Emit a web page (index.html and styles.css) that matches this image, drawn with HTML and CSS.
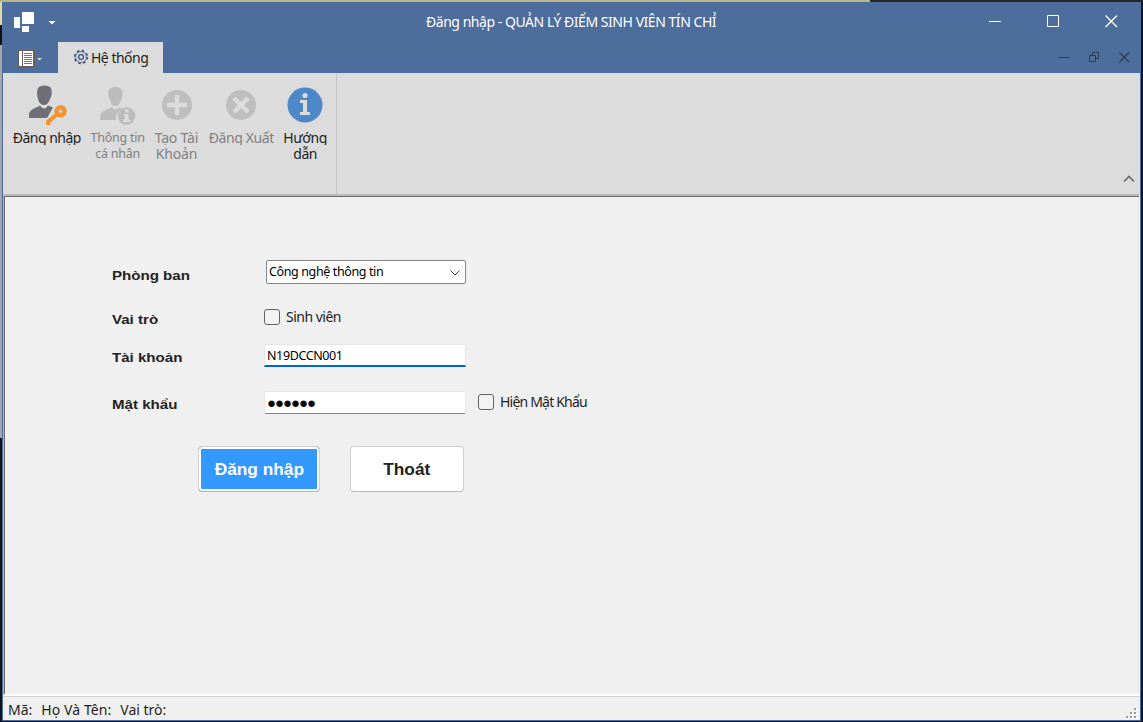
FILE: index.html
```html
<!DOCTYPE html>
<html lang="vi">
<head>
<meta charset="utf-8">
<title>Đăng nhập - QUẢN LÝ ĐIỂM SINH VIÊN TÍN CHỈ</title>
<link rel="stylesheet" href="styles.css">
</head>
<body>
<div class="desktop">
<div class="window">
  <header class="titlebar">
    <svg class="applogo" width="46" height="24" viewBox="0 0 46 24"><path fill="#fff" d="M8 1h12v12H8zM0 6h6v11H0zM8 15h7v6H8zM34.500 10h7l-3.500 3.500z"/></svg>
    <h1 class="title"><span class="t-title">Đăng nhập - QUẢN LÝ ĐIỂM SINH VIÊN TÍN CHỈ</span></h1>
    <svg class="controls" width="132" height="14" viewBox="0 0 132 14" fill="none" stroke="#fff"><path d="M0 7.500h12" /><path d="M58.500 1.500h11v11h-11z"/><path stroke-width="1.400" d="M116.500 1.500l11.500 11.500M128 1.500L116.500 13"/></svg>
  </header>
  <nav class="tabs">
    <svg class="filemenu" width="26" height="18" viewBox="0 0 26 18"><path fill="#65625d" d="M0 0h17v18H0z"/><path fill="#fff" d="M1 1h3v15H1zM5 1h10v15H5z"/><path stroke="#77746f" d="M6 3.500h8M6 5.500h8M6 7.500h8M6 9.500h8M6 11.500h8M6 13.500h8"/><path fill="#ddd" d="M19 8h5l-2.500 2.500z"/></svg>
    <div class="tab">
      <svg width="16" height="16" viewBox="0 0 16 16"><circle cx="8" cy="8" r="6" fill="none" stroke="#465270" stroke-width="2.400" stroke-dasharray="2.400 2.312"/><circle cx="8" cy="8" r="4.300" fill="none" stroke="#c9d6ec" stroke-width="2.600"/><circle cx="8" cy="8" r="5.500" fill="none" stroke="#55617e" stroke-width=".8"/><circle cx="8" cy="8" r="2.400" fill="#dcdcdc" stroke="#465270" stroke-width="1.300"/></svg>
      <span class="t-tab">Hệ thống</span>
    </div>
    <svg class="mdi" width="74" height="12" viewBox="0 0 74 12" fill="none" stroke="#2f3b52"><path d="M0 6.500h10M30.500 4.500h6v6h-6zM33.500 4v-2.500h6v6H37"/><path stroke-width="1.300" d="M60.500 1.500l9.500 9.500M70 1.500L60.500 11"/></svg>
  </nav>
  <section class="ribbon">
    <div class="group">
      <div class="item login">
        <svg width="40" height="42" viewBox="0 0 40 42"><path fill="#6d6e77" d="M9 3C11-.5 20-.5 22 3c1.500 4 .5 8-1 11-1.500 4-3 6-6 6s-5-2-6-6C8 11 7.500 7 9 3zM11 20.500q4.500 6 8 0l5 2-6 10.500H0v-4c1-5 7-6 11-8.500z"/><path fill="#f29434" fill-rule="evenodd" d="M31.500 20a6.300 6.300 0 1 1 0 12.600q-2 0-3.500-.8l-2.500 2.700h-2v2.500h-2v3H17v-4.300l8.800-7.200A6.300 6.300 0 0 1 31.500 20zM31.500 24.600a1.700 1.700 0 1 0 0 3.400a1.700 1.700 0 0 0 0-3.400z"/></svg>
        <span class="t-login cut">Đăng nhập</span>
      </div>
      <div class="item info off">
        <svg width="36" height="40" viewBox="0 0 36 40"><path fill="#bcbcbc" d="M9 3c2-4 11-4 13 0 1.300 4 .5 7-1 10-1.500 4-2.500 6-5.500 6s-4-2-5.500-6C8.500 10 7.500 7 9 3zM12 20q4 5 7 0l3 1.500c-5 3-7 8-6 11.500H0v-4c1-5 7-6 12-9z"/><circle cx="26.500" cy="29" r="8.700" fill="#bcbcbc"/><path fill="#dcdcdc" d="M25 22.500h3.500v3H25zM24 27h4.500v5.500H30V35h-7v-2.500h2v-3h-1z"/></svg>
        <span class="t-info">Thông tin</span><span class="t-info2">cá nhân</span>
      </div>
      <div class="item create off">
        <svg width="30" height="30" viewBox="0 0 30 30"><circle cx="15" cy="15" r="15" fill="#bebebe"/><path stroke="#dcdcdc" stroke-width="4.500" d="M15 5v20M5 15h20"/></svg>
        <span class="t-create cut">Tạo Tài</span><span class="t-create2">Khoản</span>
      </div>
      <div class="item logout off">
        <svg width="30" height="30" viewBox="0 0 30 30"><circle cx="15" cy="15" r="15" fill="#bebebe"/><path stroke="#dcdcdc" stroke-width="4.500" d="M8 8l14 14M22 8L8 22"/></svg>
        <span class="t-logout cut">Đăng Xuất</span>
      </div>
      <div class="item guide">
        <svg width="36" height="36" viewBox="0 0 36 36"><circle cx="18" cy="18" r="17.500" fill="#4d89c9"/><circle cx="18" cy="8.500" r="2.600" fill="#dcdcdc"/><path fill="#dcdcdc" d="M13 13h7v12h3v3H13v-3h3v-9h-3z"/></svg>
        <span class="t-guide cut">Hướng</span><span class="t-guide2">dẫn</span>
      </div>
    </div>
    <svg class="collapse" width="12" height="8" viewBox="0 0 12 8"><path d="M1 6.500l5-5 5 5" fill="none" stroke="#666" stroke-width="1.600"/></svg>
  </section>
  <main class="client">
    <div class="row dept"><div class="label"><span class="t-dept">Phòng ban</span></div>
      <div class="combo"><span class="t-combo">Công nghệ thông tin</span><svg width="10" height="6" viewBox="0 0 10 6"><path d="M.5.500L5 5 9.500.500" fill="none" stroke="#444"/></svg></div></div>
    <div class="row role"><div class="label"><span class="t-role">Vai trò</span></div><i class="check"></i><span class="t-student">Sinh viên</span></div>
    <div class="row account"><div class="label"><span class="t-account">Tài khoản</span></div><div class="field active"><span class="t-user">N19DCCN001</span></div></div>
    <div class="row pass"><div class="label"><span class="t-pass">Mật khẩu</span></div><div class="field"><span class="t-dots">●●●●●●</span></div><i class="check"></i><span class="t-show">Hiện Mật Khẩu</span></div>
    <div class="buttons"><div class="btn primary"><span class="t-blogin">Đăng nhập</span></div><div class="btn quit"><span class="t-quit">Thoát</span></div></div>
  </main>
  <footer class="status">
    <span class="t-ma">Mã:</span><span class="t-name">Họ Và Tên:</span><span class="t-vai">Vai trò:</span>
    <svg class="grip" width="12" height="12" viewBox="0 0 12 12"><path fill="#fff" d="M9 1h3v2H9zM5 5h3v2H5zM9 5h3v2H9zM1 9h3v2H1zM5 9h3v2H5zM9 9h3v2H9z"/><path fill="#999" d="M8 0h2v2H8zM4 4h2v2H4zM8 4h2v2H8zM0 8h2v2H0zM4 8h2v2H4zM8 8h2v2H8z"/></svg>
  </footer>
</div>
</div>
</body>
</html>
```
FILE: styles.css
```css
* { box-sizing: border-box; }
body { margin: 0; font: 14px/16px "Noto Sans", "Open Sans", sans-serif; color: #1e1e1e; overflow: hidden; }
span { white-space: nowrap; }
svg { display: block; flex: none; }
.desktop {
  width: 1143px; height: 722px; padding: 2px 2px 1px;
  background:
    linear-gradient(to right, #b9b58b 870px, #242529 870px) 0 0 / 100% 2px no-repeat,
    linear-gradient(#ddd8a4 25px, #111 25px, #111 45px, #a3a6aa 45px, #a3a6aa 438px, #101420 438px) 0 0 / 2px 100% no-repeat,
    #14161d;
}
.window { height: 719px; display: flex; flex-direction: column; border: solid #4d6d9c; border-width: 0 1px 1px; background: #f0f0f0; }
.titlebar { height: 40px; display: flex; background: #4d6d9c; color: #fff; }
.applogo { margin: 9px 0 0 11px; }
.title { margin: 12px 0 0 366px; width: 563px; font: inherit; }
.controls { margin-top: 12px; }
.tabs { height: 31px; display: flex; background: #4d6d9c; }
.filemenu { margin: 8px 0 0 15px; }
.tab { width: 105px; margin-left: 14px; background: #dcdcdc; display: flex; padding: 8px 0 0 15px; gap: 2px; }
.tab svg { margin-top: -1px; }
.mdi { margin: 9px 0 0 896px; }
.ribbon { height: 121px; background: #dcdcdc; display: flex; justify-content: space-between; }
.group { width: 334px; border-right: 1px solid #c4c4c4; display: flex; }
.item { display: flex; flex-direction: column; align-items: center; }
.off { color: #818181; }
.login { width: 88px; padding-top: 12px; }
.login svg { margin: 0 0 3px 4px; }
.info { width: 54px; padding-top: 14px; }
.info svg { margin: 0 0 3px 1px; }
.create { width: 64px; padding-top: 17px; }
.create svg { margin: 0 0 10px 2px; }
.logout { width: 64px; padding-top: 17px; margin-left: 1px; }
.logout svg { margin-bottom: 10px; }
.guide { width: 62px; padding-top: 14px; margin-left: 1px; }
.guide svg { margin-bottom: 7px; }
.cut { clip-path: inset(-2px 0 1px 0); }
.collapse { margin: 102px 5px 0 0; }
.client { height: 502px; border-top: 2px solid #bbb; box-shadow: inset 1px 1px #696969, inset -1px 0 #e3e3e3; border-bottom: 2px solid #fff; padding: 64px 0 0 109px; border-left: 1px solid #b5b5b5; border-right: 1px solid #fff; }
.label { width: 152px; font: 700 13px/16px "Liberation Sans", sans-serif; color: #222; }
.label span { display: inline-block; transform: scaleX(1.16); transform-origin: left; }
.row { display: flex; align-items: flex-start; margin-left: -1px; }
.dept { height: 49px; }
.dept .label { margin-top: 8px; }
.combo { margin-left: 2px; width: 200px; height: 24px; border: 1px solid #858585; border-radius: 2px; background: #fff; padding: 3px 5px 0 2px; display: flex; justify-content: space-between; color: #000; }
.combo svg { margin-top: 6px; }
.check { width: 16px; height: 16px; border: 1px solid #626262; border-radius: 3px; background: #f3f3f3; margin-right: 6px; }
.role { height: 35px; }
.role .label { margin-top: 3px; }
.account { height: 47px; }
.account .label { margin-top: 6px; }
.field { width: 202px; height: 23px; background: #fff; border: 1px solid #e6e6e6; border-bottom: 1px solid #858585; border-radius: 2px; padding: 3px 0 0 2px; color: #000; }
.field span { display: block; }
.active { border-bottom: 2px solid #0067c0; border-radius: 0; }
.pass { height: 55px; }
.pass .label { margin-top: 6px; }
.pass .field { padding-top: 2px; }
.pass .check { margin: 3px 6px 0 12px; }
.t-show { margin-top: 3px; }
.buttons { display: flex; gap: 30px; margin-left: 85px; }
.btn { height: 46px; border: 1px solid #cfcfcf; border-bottom-color: #b9b9b9; border-radius: 4px; background: #fff; display: flex; align-items: center; justify-content: center; font: 700 16px/20px "Liberation Sans", sans-serif; }
.btn span { transform: scaleX(1.08); margin-top: 1px; }
.primary { width: 122px; color: #fff; background: #3399ff; box-shadow: inset 0 0 0 2px #fff; }
.quit { width: 114px; color: #222; }
.status { flex: 1; border-top: 1px solid #d2d2d2; display: flex; padding: 5px 2px 0 5px; gap: 9px; }
.grip { margin: 6px 0 0 auto; }
.t-title { letter-spacing: -.46px; }
.t-tab { letter-spacing: -.5px; }
.t-login { letter-spacing: -.5px; }
.t-create, .t-create2 { letter-spacing: -.2px; }
.t-logout, .t-guide, .t-guide2 { letter-spacing: -.4px; }
.t-info, .t-info2 { font-size: 12.500px; letter-spacing: -.25px; }
.t-combo, .t-user { font-size: 12.500px; letter-spacing: -.38px; }
.t-student { letter-spacing: -.5px; }
.t-show { letter-spacing: -.8px; }
.t-name { letter-spacing: .08px; }
.t-dots { font-size: 15px; letter-spacing: -1.050px; }
```
